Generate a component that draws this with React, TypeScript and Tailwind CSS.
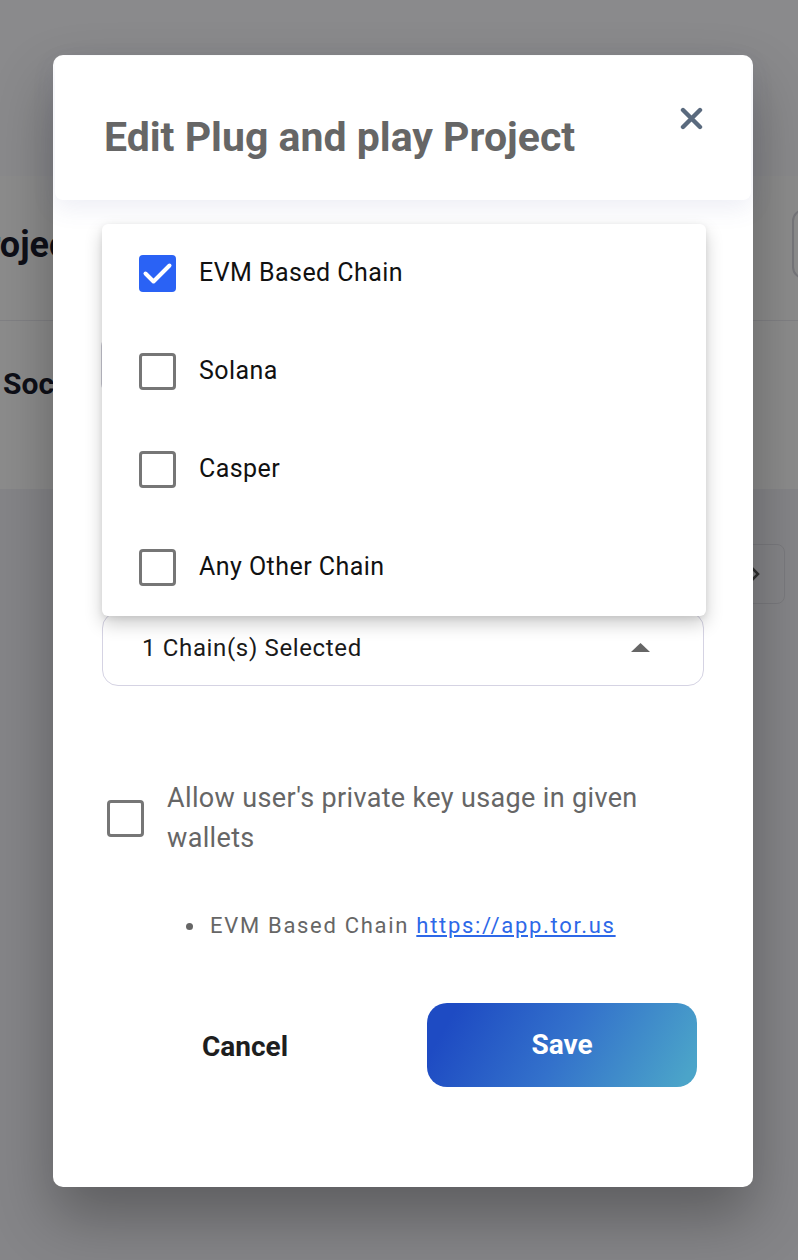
const chains = [
  { name: "EVM Based Chain", checked: true },
  { name: "Solana", checked: false },
  { name: "Casper", checked: false },
  { name: "Any Other Chain", checked: false },
];

const CheckBox = ({ checked }: { checked: boolean }) => {
  if (checked) {
    return (
      <span className="flex h-[37px] w-[37px] shrink-0 items-center justify-center rounded-[4px] bg-[#2a62f5]">
        <svg width="37" height="37" viewBox="0 0 37 37" fill="none">
          <path
            d="M6.5 18.5 L14.5 26.5 L30.5 10.5"
            stroke="white"
            strokeWidth="4"
            strokeLinecap="round"
            strokeLinejoin="round"
          />
        </svg>
      </span>
    );
  }
  return (
    <span className="h-[37px] w-[37px] shrink-0 rounded-[4px] border-[3px] border-[#767676]" />
  );
};

export default function App() {
  return (
    <div className="relative h-[1260px] w-full overflow-hidden bg-white font-['Roboto',sans-serif]">
      {/* page behind the dialog */}
      <div className="flex h-full flex-col">
        <div className="h-[176px] bg-[#fbfbff]" />
        <div className="flex h-[145px] items-start justify-between border-b border-[#ececf0] pt-[33px]">
          <h1 className="-ml-[36px] mt-[15px] text-[36px] font-bold leading-[42px] text-[#1b1c2c]">
            Projects
          </h1>
          <button className="-mr-[94px] h-[70px] w-[100px] rounded-xl border-2 border-[#d7d7de]" />
        </div>
        <div className="h-[168px] pl-[3px] pt-[45px]">
          <h2 className="text-[30px] font-bold leading-[35px] text-[#1b1c2c]">Social Login</h2>
        </div>
        <div className="flex-1 bg-[#f3f3f7] pt-[55px]">
          <div className="ml-auto mr-[13px] flex h-[60px] w-[100px] items-center justify-end rounded-lg border border-[#dedee6] pr-[24px]">
            <svg width="10" height="16" viewBox="0 0 10 16" fill="none">
              <path d="M2 2 L8 8 L2 14" stroke="#555" strokeWidth="2.5" />
            </svg>
          </div>
        </div>
      </div>

      <div className="absolute inset-0 bg-black/45" />

      {/* dialog */}
      <div className="absolute left-[53px] top-[55px] w-[700px] rounded-[10px] bg-white shadow-[0_30px_60px_rgba(0,0,0,0.3)]">
        <div className="mx-[2px] mt-[1px] flex h-[144px] items-start justify-between rounded-[8px] bg-white pl-[49px] pr-[48px] pt-[51px] shadow-[0_8px_24px_rgba(80,90,160,0.1)]">
          <h2 className="mt-[6px] text-[41px] font-bold leading-[48px] text-[#666666]">
            Edit Plug and play Project
          </h2>
          <svg width="23" height="23" viewBox="0 0 23 23" fill="none">
            <path
              d="M3 3 L20 20 M20 3 L3 20"
              stroke="#5a6a7e"
              strokeWidth="4.4"
              strokeLinecap="round"
            />
          </svg>
        </div>

        <div className="relative flex flex-col px-[49px] pb-[100px]">
          <div className="-ml-[1px] mt-[138px] h-[54px] rounded-l-lg border-l border-[#c8c8d2]" />

          <div className="mt-[220px] flex h-[74px] items-center justify-between rounded-[16px] border-[1.5px] border-[#d5d3e3] pl-[39px] pr-[53px]">
            <span className="-mt-[3px] text-[24px] leading-[28px] tracking-[0.65px] text-[#1a1a1a]">
              1 Chain(s) Selected
            </span>
            <svg width="19" height="9" viewBox="0 0 19 9" className="-mt-[3px]">
              <polygon points="0,9 9.5,0 19,9" fill="#666" />
            </svg>
          </div>

          <div className="mt-[93px] flex items-center gap-[23px] pl-[5px]">
            <CheckBox checked={false} />
            <p className="text-[27px] leading-[39.5px] tracking-[0.35px] text-[#666666]">
              Allow user's private key usage in given wallets
            </p>
          </div>

          <div className="mt-[53px] flex items-center gap-[17px] pl-[84px]">
            <span className="h-[7px] w-[7px] rounded-full bg-[#666]" />
            <p className="text-[22px] leading-[30px] tracking-[1.7px] text-[#666666]">
              EVM Based Chain{" "}
              <a href="#" className="text-[#2d68e8] underline">
                https://app.tor.us
              </a>
            </p>
          </div>

          <div className="mt-[62px] flex h-[84px] items-center pl-[8px]">
            <button className="mt-[4px] w-[270px] text-[28px] font-bold text-[#1e1e1e]">Cancel</button>
            <button className="ml-[47px] h-[84px] w-[270px] rounded-[20px] bg-[linear-gradient(120deg,#1e4bc3_10%,#3371cb_50%,#4ba4c9_95%)] text-[28px] font-bold text-white">
              Save
            </button>
          </div>

          {/* chain picker menu */}
          <div className="absolute left-[49px] top-[24px] w-[604px] rounded-[6px] bg-white shadow-[0_8px_18px_rgba(0,0,0,0.2),0_2px_6px_rgba(0,0,0,0.08)]">
            {chains.map((c) => (
              <div key={c.name} className="flex h-[98px] items-center gap-[23px] pl-[37px]">
                <CheckBox checked={c.checked} />
                <span className="text-[25px] leading-[30px] tracking-[0.45px] text-[#111]">{c.name}</span>
              </div>
            ))}
          </div>
        </div>
      </div>
    </div>
  );
}
